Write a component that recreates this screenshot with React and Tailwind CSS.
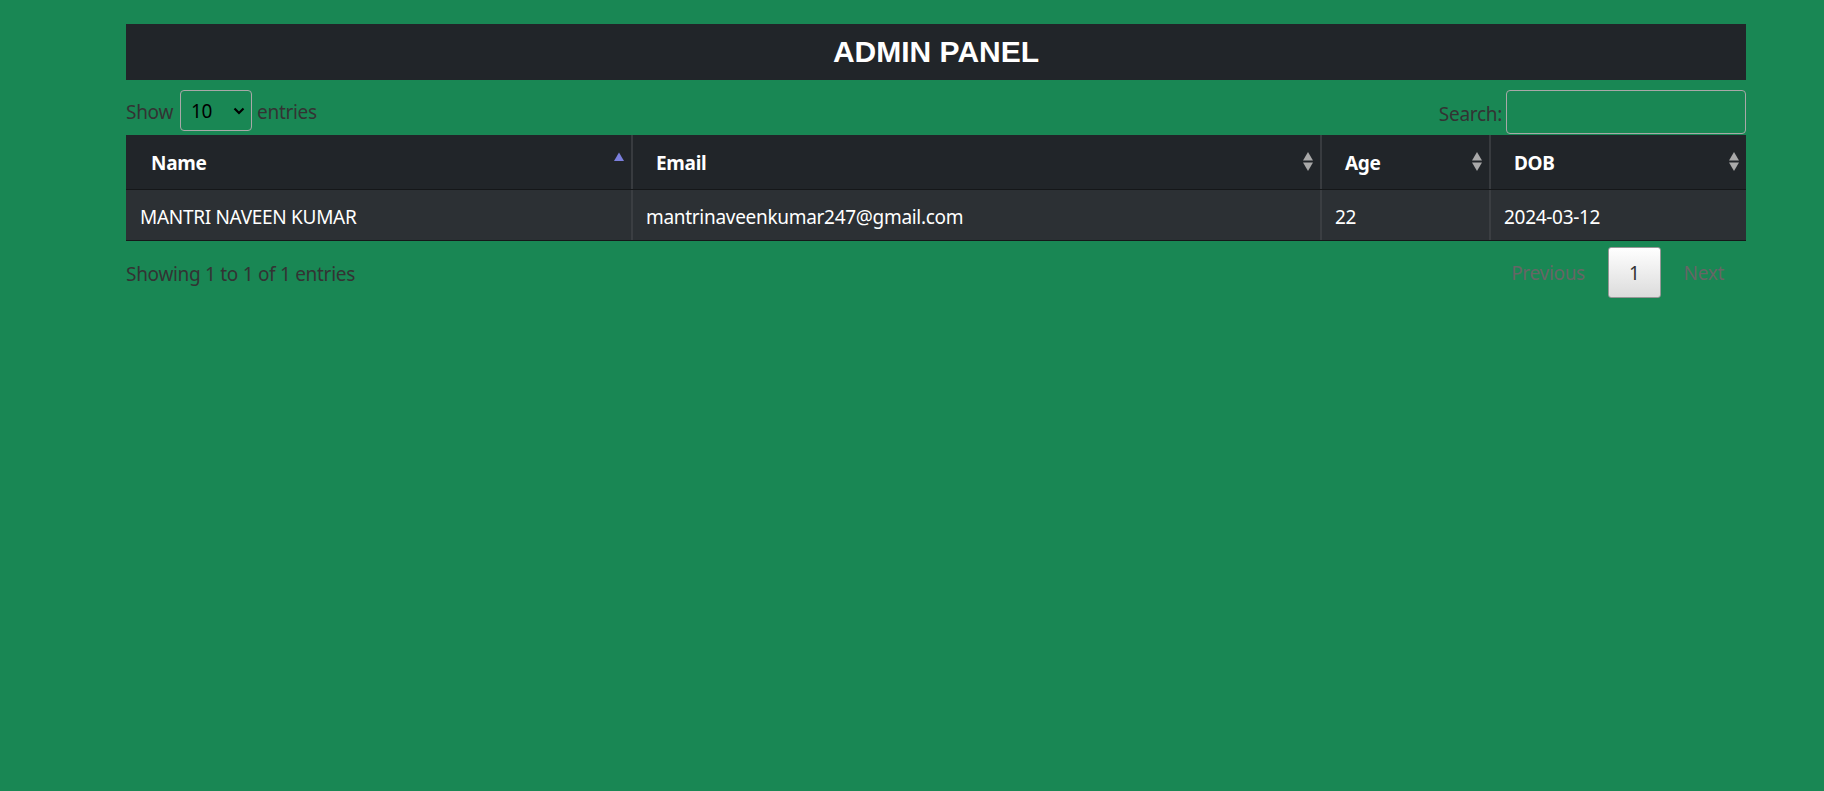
import React from "react";

const Sort = ({ active }) => (
  <svg
    width="10"
    height="19"
    viewBox="0 0 10 19"
    className="absolute right-[7px] top-[17px]"
  >
    {active ? (
      <path d="M5 0.5L10 9H0Z" fill="#7b7fdc" />
    ) : (
      <>
        <path d="M5 0L10 8.5H0Z" fill="#a9a9a9" />
        <path d="M0 10.5H10L5 19Z" fill="#a9a9a9" />
      </>
    )}
  </svg>
);

const cols = "grid grid-cols-[505px_689px_169px_257px]";

export default function App() {
  const headers = ["Name", "Email", "Age", "DOB"];
  const row = [
    "MANTRI NAVEEN KUMAR",
    "mantrinaveenkumar247@gmail.com",
    "22",
    "2024-03-12",
  ];
  return (
    <div
      className="min-h-screen bg-[#198754] pt-[24px]"
      style={{ fontFamily: '"Noto Sans", sans-serif' }}
    >
      <div className="ml-[126px] w-[1620px]">
        {/* Title bar */}
        <div className="flex h-[56px] items-center justify-center bg-[#212529]">
          <h1
            className="text-[30px] font-bold leading-none text-white"
            style={{ fontFamily: '"Liberation Sans", Arial, sans-serif' }}
          >
            ADMIN PANEL
          </h1>
        </div>

        {/* Controls */}
        <div className="flex items-start justify-between pt-[10px] pb-[1px] text-[19px] tracking-[-0.3px] text-[#333]">
          <div className="flex h-[41px] items-center">
            <span className="translate-y-[2px]">Show</span>
            <div className="ml-[7px] mr-[5px] flex h-[41px] w-[72px] items-center justify-between rounded-[4px] border border-[#a8a8a8] pl-[10px] pr-[5px] text-black">
              <span className="translate-y-[1px]">10</span>
              <svg width="14" height="14" viewBox="0 0 14 14">
                <path
                  d="M2.5 4.5L7 9L11.5 4.5"
                  fill="none"
                  stroke="#000"
                  strokeWidth="2.2"
                />
              </svg>
            </div>
            <span className="translate-y-[2px]">entries</span>
          </div>
          <div className="flex h-[44px] items-center">
            <span className="mr-[4px] translate-y-[2px]">Search:</span>
            <div className="h-[44px] w-[240px] rounded-[4px] border border-[#a8a8a8]" />
          </div>
        </div>

        {/* Table */}
        <div className="text-[19px] tracking-[-0.3px] text-white">
          <div className={`${cols} h-[55px] border-b border-[#151719] bg-[#212529]`}>
            {headers.map((h, i) => (
              <div
                key={h}
                className={`relative flex items-center pl-[23px] font-bold ${
                  i > 0 ? "border-l-2 border-[#383b3f]" : "pl-[25px]"
                }`}
              >
                <span className="translate-y-[1px]">{h}</span>
                <Sort active={i === 0} />
              </div>
            ))}
          </div>
          <div className={`${cols} h-[51px] border-b border-[#151719] bg-[#2c3034]`}>
            {row.map((c, i) => (
              <div
                key={i}
                className={`flex items-center ${
                  i > 0 ? "border-l-2 border-[#3b3e42] pl-[13px]" : "pl-[14px]"
                }`}
              >
                <span className="translate-y-[2px]">{c}</span>
              </div>
            ))}
          </div>
        </div>

        {/* Footer */}
        <div className="mt-[6px] flex items-center justify-between text-[19px] tracking-[-0.3px]">
          <span className="translate-y-[2px] text-[#333]">Showing 1 to 1 of 1 entries</span>
          <div className="flex items-center">
            <span className="translate-y-[1px] px-[20px] text-[#666]">Previous</span>
            <span className="ml-[3px] flex h-[51px] items-center rounded-[3px] border border-[#979797] bg-gradient-to-b from-white to-[#dcdcdc] px-[20px] text-[#333]">
              <span className="translate-y-[1px]">1</span>
            </span>
            <span className="ml-[3px] translate-y-[1px] pl-[20px] pr-[22px] text-[#666]">Next</span>
          </div>
        </div>
      </div>
    </div>
  );
}
